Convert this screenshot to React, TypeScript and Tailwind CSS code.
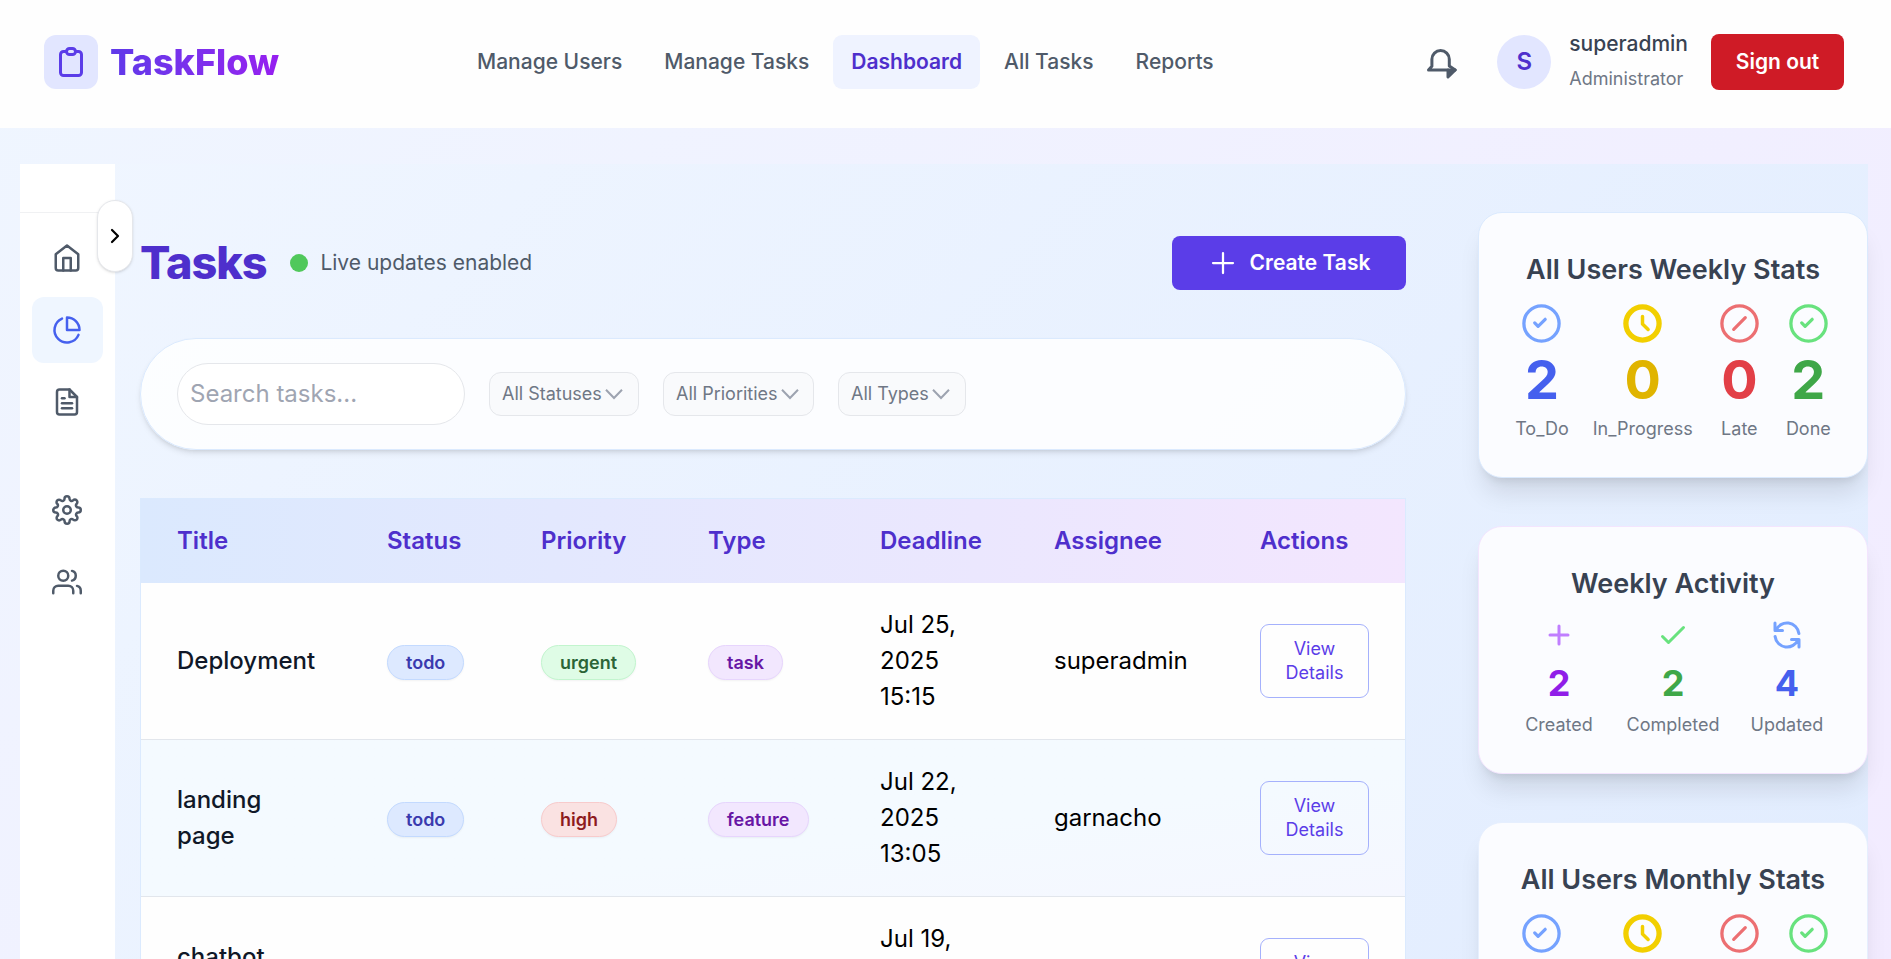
import type { ReactNode } from 'react';
import { FiFileText, FiHome, FiPieChart, FiSettings, FiUsers } from 'react-icons/fi';

const navItems = [
  { label: 'Manage Users', active: false },
  { label: 'Manage Tasks', active: false },
  { label: 'Dashboard', active: true },
  { label: 'All Tasks', active: false },
  { label: 'Reports', active: false },
];

const columns = ['Title', 'Status', 'Priority', 'Type', 'Deadline', 'Assignee', 'Actions'];

type Task = {
  title: string;
  status: string;
  priority: string;
  type: string;
  deadline: string;
  assignee: string;
};

const tasks: Task[] = [
  { title: 'Deployment', status: 'todo', priority: 'urgent', type: 'task', deadline: 'Jul 25, 2025 15:15', assignee: 'superadmin' },
  { title: 'landing page', status: 'todo', priority: 'high', type: 'feature', deadline: 'Jul 22, 2025 13:05', assignee: 'garnacho' },
  { title: 'chatbot page', status: 'todo', priority: 'high', type: 'feature', deadline: 'Jul 19, 2025 13:05', assignee: 'garnacho' },
];

const pillTone: Record<string, string> = {
  todo: 'border-[#c3daff] bg-[#dde9ff] text-[#3a3aae]',
  urgent: 'border-[#c2f5ce] bg-[#dffce6] text-[#2b6437]',
  high: 'border-[#f8cbcc] bg-[#fae2e2] text-[#8e1b1e]',
  task: 'border-[#e7d5fd] bg-[#f2e7fe] text-[#6816a5]',
  feature: 'border-[#e7d5fd] bg-[#f2e7fe] text-[#6816a5]',
};

function Pill({ label }: { label: string }) {
  return (
    <span
      className={`inline-flex h-[35px] items-center rounded-full border px-[18px] text-[18px] leading-none font-semibold shadow-xs ${pillTone[label]}`}
    >
      {label}
    </span>
  );
}

function Stroke({ className, width = 2, children }: { className: string; width?: number; children: ReactNode }) {
  return (
    <svg
      viewBox="0 0 24 24"
      fill="none"
      stroke="currentColor"
      strokeWidth={width}
      strokeLinecap="round"
      strokeLinejoin="round"
      className={className}
    >
      {children}
    </svg>
  );
}

function Ring({ kind, className }: { kind: 'check' | 'clock' | 'slash'; className: string }) {
  return (
    <svg viewBox="-22.5 -22.5 45 45" fill="none" stroke="currentColor" strokeLinecap="round" strokeLinejoin="round" className={`size-[45px] ${className}`}>
      {kind === 'clock' ? <circle r="16.6" strokeWidth="5.3" /> : <circle r="17.6" strokeWidth="3.3" />}
      {kind === 'check' && <path d="M-6.8 -.6L-3.4 2.9L3.7 -4.2" strokeWidth="3.2" />}
      {kind === 'clock' && <path d="M0 -7V.6L5.6 6" strokeWidth="3.5" />}
      {kind === 'slash' && <path d="M-5.8 5.8L5.8 -5.8" strokeWidth="3.2" />}
    </svg>
  );
}

function Header() {
  return (
    <header className="flex h-32 shrink-0 items-start bg-[#fefefe] pr-[47px] pl-[44px]">
      <div className="mt-[35px] flex w-[415px] items-center">
        <div className="flex size-[54px] items-center justify-center rounded-[12px] bg-[#e2e6ff] text-[#5b3de8]">
          <Stroke className="size-9">
            <path d="M9 5H7a2 2 0 00-2 2v12a2 2 0 002 2h10a2 2 0 002-2V7a2 2 0 00-2-2h-2M9 5a2 2 0 002 2h2a2 2 0 002-2M9 5a2 2 0 012-2h2a2 2 0 012 2" />
          </Stroke>
        </div>
        <span className="ml-[12px] bg-linear-to-r from-[#5f39e9] to-[#961ef0] bg-clip-text text-[36px] leading-[54px] font-extrabold text-transparent">
          TaskFlow
        </span>
      </div>
      <nav className="mt-[35px] flex gap-[6px]">
        {navItems.map((item) => (
          <a
            key={item.label}
            className={`flex h-[54px] items-center rounded-[9px] px-[18px] text-[21px] whitespace-nowrap ${
              item.active ? 'bg-[#eff3ff] font-semibold text-[#4e2fcc]' : 'font-medium text-[#4f5a69]'
            }`}
          >
            {item.label}
          </a>
        ))}
      </nav>
      <div className="ml-auto flex items-start">
        <svg viewBox="0 0 36 36" fill="none" stroke="#4f5a69" strokeWidth="3" strokeLinecap="round" strokeLinejoin="round" className="mt-[44px] mr-[39px] size-9">
          <path d="M26 26h7.200l-7.200 7z" fill="#4f5a69" />
          <path d="M26 26H6.500L9.900 22.300V15.300a8.700 8.700 0 0117.400 0V22L33.200 26" />
        </svg>
        <div className="mt-[35px] flex size-[54px] items-center justify-center rounded-full bg-[#e2e6ff] text-[24px] font-semibold text-[#4e2fcc]">S</div>
        <div className="mt-[25px] ml-[18px] flex flex-col">
          <span className="text-[21px] leading-[37px] font-medium text-[#384252]">superadmin</span>
          <span className="text-[18px] leading-[34px] text-[#6f7785]">Administrator</span>
        </div>
        <button className="mt-[34px] ml-[23px] flex h-14 w-[133px] items-center justify-center rounded-[8px] bg-[#cf1b26] text-[21px] font-semibold text-white">
          Sign out
        </button>
      </div>
    </header>
  );
}

function SideItem({ active = false, children }: { active?: boolean; children: ReactNode }) {
  return (
    <a className={`flex h-[66px] w-[71px] items-center justify-center rounded-[12px] pr-[1px] ${active ? 'bg-[#eff6ff] text-[#4560ee]' : 'text-[#4f5a69]'}`}>
      {children}
    </a>
  );
}

function Sidebar() {
  return (
    <aside className="relative w-[95px] shrink-0 bg-white">
      <div className="h-[49px] border-b border-[#f0f1f3]" />
      <nav className="flex flex-col items-center gap-[6px] pt-3">
        <SideItem><FiHome className="size-[30px]" /></SideItem>
        <SideItem active><FiPieChart className="size-[30px]" /></SideItem>
        <SideItem><FiFileText className="size-[30px]" /></SideItem>
        <div className="h-[30px]" />
        <SideItem><FiSettings className="size-[30px]" /></SideItem>
        <SideItem><FiUsers className="size-[30px]" /></SideItem>
      </nav>
      <button className="absolute top-9 left-[77px] flex h-[72px] w-9 items-center justify-center rounded-full border border-[#e5e7eb] bg-white text-black shadow-sm">
        <Stroke className="size-[24px]" width={2.2}>
          <path d="M9 18l6-6-6-6" />
        </Stroke>
      </button>
    </aside>
  );
}

function Filter({ label, width }: { label: string; width: string }) {
  return (
    <div className={`flex h-[44px] items-center gap-[3px] rounded-[12px] border border-[#e5e7eb] bg-[#f9fafc] pl-3 text-[18px] text-[#6f7785] ${width}`}>
      <span className="pb-[2px] whitespace-nowrap">{label}</span>
      <svg viewBox="0 0 18 12" fill="none" stroke="#9da3b0" strokeWidth="2" className="h-3 w-[18px]">
        <path d="M1 1.800L9 10L17 1.800" />
      </svg>
    </div>
  );
}

function TaskTable() {
  return (
    <table className="mt-12 w-[1266px] table-fixed border-separate border-spacing-0 border border-[#dbeafe] bg-white text-left text-[24px] leading-9">
      <colgroup>
        <col className="w-[210px]" />
        <col className="w-[154px]" />
        <col className="w-[167px]" />
        <col className="w-[172px]" />
        <col className="w-[174px]" />
        <col className="w-[206px]" />
        <col className="w-[181px]" />
      </colgroup>
      <thead className="bg-linear-to-r from-[#dbe9fe] to-[#f3e6fe]">
        <tr>
          {columns.map((column) => (
            <th key={column} className="h-[84px] px-9 py-0 font-semibold text-[#4e2fcc]">
              {column}
            </th>
          ))}
        </tr>
      </thead>
      <tbody className="text-black">
        {tasks.map((task, index) => (
          <tr key={task.title} className={index % 2 ? 'bg-linear-to-br from-[#f4faff] from-60% to-[#f5f7ff]' : 'bg-[#fefefe]'}>
            <td className="h-[157px] border-b border-[#e2e6ec] px-9 py-0 font-medium text-[#101828]">{task.title}</td>
            <td className="border-b border-[#e2e6ec] px-9 pt-[1px] pb-0"><Pill label={task.status} /></td>
            <td className="border-b border-[#e2e6ec] px-9 pt-[1px] pb-0"><Pill label={task.priority} /></td>
            <td className="border-b border-[#e2e6ec] px-9 pt-[1px] pb-0"><Pill label={task.type} /></td>
            <td className="border-b border-[#e2e6ec] px-9 py-0">{task.deadline}</td>
            <td className="border-b border-[#e2e6ec] px-9 py-0">{task.assignee}</td>
            <td className="border-b border-[#e2e6ec] py-0 pr-0 pl-9">
              <button className="flex h-[74px] w-[109px] items-center justify-center rounded-[9px] border border-[#a5b1fc] px-5 text-center text-[18px] leading-6 text-[#5b3de8]">
                View Details
              </button>
            </td>
          </tr>
        ))}
      </tbody>
    </table>
  );
}

function Tasks() {
  return (
    <section className="w-[1266px] shrink-0">
      <div className="mt-[72px] flex h-[54px] items-center">
        <h1 className="text-[45px] leading-[54px] font-extrabold tracking-[-1.1px] text-[#4e2fcc]">Tasks</h1>
        <span className="ml-6 size-[18px] rounded-full bg-[#50c85b]" />
        <span className="ml-3 text-[21px] text-[#4f5a69]">Live updates enabled</span>
        <button className="ml-auto flex h-[54px] w-[234px] items-center justify-center gap-3 rounded-[8px] bg-[#5b3de8] text-[21px] font-semibold text-white">
          <Stroke className="size-[30px]" width={1.8}>
            <path d="M12 4v16m8-8H4" />
          </Stroke>
          Create Task
        </button>
      </div>
      <div className="mt-12 flex h-28 items-center gap-6 rounded-full border border-[#dbeafe] bg-white/85 px-9 shadow-md">
        <input
          placeholder="Search tasks..."
          className="h-[62px] w-[288px] rounded-full border border-[#e5e7eb] bg-white px-3 pb-[2px] text-[24px] outline-none placeholder:text-[#9fa5b2]"
        />
        <Filter label="All Statuses" width="w-[150px]" />
        <Filter label="All Priorities" width="w-[151px]" />
        <Filter label="All Types" width="w-[128px]" />
      </div>
      <TaskTable />
    </section>
  );
}

const stats = [
  { label: 'To_Do', value: 2, kind: 'check', icon: 'text-[#75a2ff]', text: 'text-[#4560ee]' },
  { label: 'In_Progress', value: 0, kind: 'clock', icon: 'text-[#f2cf00]', text: 'text-[#e0b400]' },
  { label: 'Late', value: 0, kind: 'slash', icon: 'text-[#ec6f72]', text: 'text-[#e23f47]' },
  { label: 'Done', value: 2, kind: 'check', icon: 'text-[#68e27e]', text: 'text-[#3fa748]' },
] as const;

function StatsCard({ title, border }: { title: string; border: string }) {
  return (
    <div className={`flex h-[266px] shrink-0 flex-col items-center rounded-[24px] border bg-[#fbfcff] pt-[37px] shadow-xl ${border}`}>
      <h2 className="text-[27px] leading-[40px] font-semibold text-[#384252]">{title}</h2>
      <div className="mt-[11px] flex gap-6">
        {stats.map((stat) => (
          <div key={stat.label} className="flex flex-col items-center">
            <Ring kind={stat.kind} className={stat.icon} />
            <span className={`mt-[6px] text-[54px] leading-[56px] font-bold ${stat.text}`}>{stat.value}</span>
            <span className="mt-[7px] text-[18px] leading-[27px] text-[#6f7785]">{stat.label}</span>
          </div>
        ))}
      </div>
    </div>
  );
}

const activity = [
  { label: 'Created', value: 2, icon: 'text-[#c07eff]', text: 'text-[#901ee8]', path: 'M12 6v6m0 0v6m0-6h6m-6 0H6' },
  { label: 'Completed', value: 2, icon: 'text-[#68e27e]', text: 'text-[#3fa748]', path: 'M5 13l4 4L19 7' },
  {
    label: 'Updated',
    value: 4,
    icon: 'text-[#75a2ff]',
    text: 'text-[#4560ee]',
    path: 'M4 4v5h.582m15.356 2A8.001 8.001 0 004.582 9m0 0H9m11 11v-5h-.581m0 0a8.003 8.003 0 01-15.357-2m15.357 2H15',
  },
];

function ActivityCard() {
  return (
    <div className="flex h-[248px] shrink-0 flex-col items-center rounded-[24px] border border-[#f3e5fe] bg-[#fbfcff] pt-[37px] shadow-xl">
      <h2 className="text-[27px] leading-[40px] font-semibold text-[#384252]">Weekly Activity</h2>
      <div className="mt-[13px] grid w-[342px] grid-cols-3">
        {activity.map((entry) => (
          <div key={entry.label} className="flex flex-col items-center">
            <Stroke className={`size-9 ${entry.icon}`}>
              <path d={entry.path} />
            </Stroke>
            <span className={`mt-[8px] text-[36px] leading-[45px] font-bold ${entry.text}`}>{entry.value}</span>
            <span className="mt-[5px] text-[18px] leading-[27px] text-[#6f7785]">{entry.label}</span>
          </div>
        ))}
      </div>
    </div>
  );
}

export default function App() {
  return (
    <div className="flex h-[959px] w-[1891px] flex-col overflow-hidden bg-linear-to-br from-[#eff6ff] to-[#f3e8ff] bg-[length:100%_1700px] bg-no-repeat font-['Inter',sans-serif]">
      <Header />
      <div className="mt-9 mr-[23px] ml-5 flex min-h-0 flex-1 bg-linear-to-br from-[#f0f6ff] to-[#dbe8fe] bg-[length:100%_2100px] bg-no-repeat">
        <Sidebar />
        <main className="flex min-w-0 flex-1 pl-[25px]">
          <Tasks />
          <aside className="mt-[48px] ml-[72px] flex w-[390px] shrink-0 flex-col gap-12">
            <StatsCard title="All Users Weekly Stats" border="border-[#dbeafe]" />
            <ActivityCard />
            <StatsCard title="All Users Monthly Stats" border="border-[#e6effe]" />
          </aside>
        </main>
      </div>
    </div>
  );
}
